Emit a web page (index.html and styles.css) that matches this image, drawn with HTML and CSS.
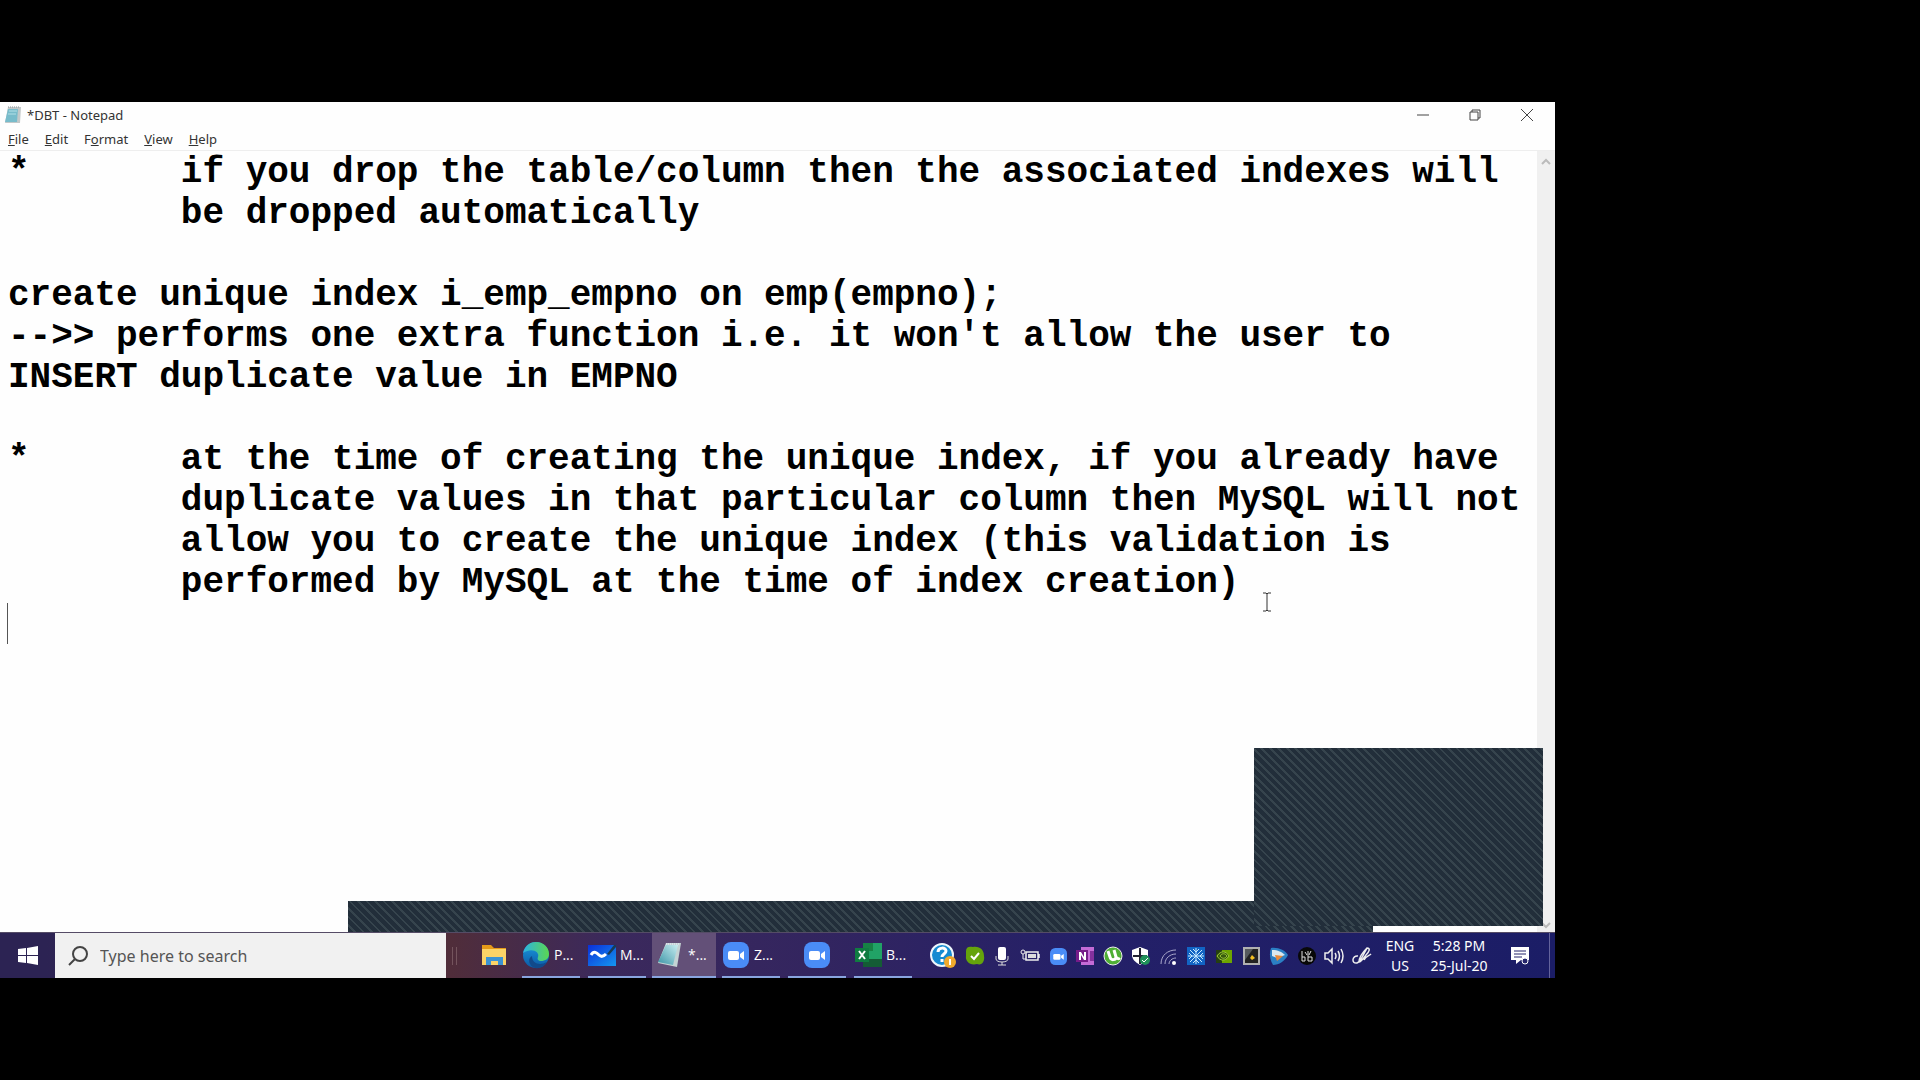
FILE: index.html
```html
<!DOCTYPE html>
<html lang="en">
<head>
<meta charset="utf-8">
<title>*DBT - Notepad</title>
<link rel="stylesheet" href="styles.css">
</head>
<body>
<svg class="defs" aria-hidden="true">
  <defs>
    <linearGradient id="edge-blue" x1="0" y1="0" x2="0" y2="1"><stop offset="0" stop-color="#1b9de2"/><stop offset="1" stop-color="#0c59a4"/></linearGradient>
    <linearGradient id="edge-green" x1="0" y1="0" x2="1" y2="0"><stop offset="0" stop-color="#2cb2e4"/><stop offset="1" stop-color="#5bd650"/></linearGradient>
    <linearGradient id="paper" x1="1" y1="0" x2="0" y2="1"><stop offset="0" stop-color="#c9eef1"/><stop offset="1" stop-color="#3a93a5"/></linearGradient>
    <linearGradient id="board" x1="0" y1="0" x2="1" y2="1"><stop offset="0" stop-color="#0b2fd8"/><stop offset="1" stop-color="#1497f0"/></linearGradient>
    <symbol id="zoom" viewBox="0 0 26 26"><rect width="26" height="26" rx="8" fill="#4a8cf7"/><rect x="5" y="9" width="11" height="9" rx="2" fill="#fff"/><path d="M17 12l4-3v9l-4-3z" fill="#fff"/></symbol>
  </defs>
</svg>
<main class="screen">
  <header class="titlebar">
    <svg class="app-icon" viewBox="0 0 18 18"><path d="M4 1h13l-1 16H1z" fill="#c3c8c9"/><path d="M4 3h10l-1 13H1z" fill="#78bccb"/><path d="M5 5h8M4 8h8" stroke="#b3e0e7"/><path d="M4 1h12" stroke="#8b9599" stroke-dasharray="1 1"/></svg>
    <h1 class="title">*DBT - Notepad</h1>
    <button class="window-button" aria-label="Minimize"><svg viewBox="0 0 14 14"><path d="M1 7h12"/></svg></button>
    <button class="window-button" aria-label="Restore"><svg viewBox="0 0 14 14"><path d="M2 4h8v8H2zM4 4V2h8v8h-2"/></svg></button>
    <button class="window-button" aria-label="Close"><svg viewBox="0 0 14 14"><path d="M1 1l12 12M13 1L1 13"/></svg></button>
  </header>
  <nav class="menubar">
    <button><u>F</u>ile</button>
    <button><u>E</u>dit</button>
    <button>F<u>o</u>rmat</button>
    <button><u>V</u>iew</button>
    <button><u>H</u>elp</button>
  </nav>
  <section class="editor">
    <textarea class="document" aria-label="Document text" spellcheck="false" wrap="off">*	if you drop the table/column then the associated indexes will
	be dropped automatically

create unique index i_emp_empno on emp(empno);
--&gt;&gt; performs one extra function i.e. it won't allow the user to
INSERT duplicate value in EMPNO

*	at the time of creating the unique index, if you already have
	duplicate values in that particular column then MySQL will not
	allow you to create the unique index (this validation is
	performed by MySQL at the time of index creation)
</textarea>
    <div class="scrollbar">
      <button aria-label="Scroll up"><svg viewBox="0 0 10 10"><path d="M1 7l4-4 4 4"/></svg></button>
      <button aria-label="Scroll down"><svg viewBox="0 0 10 10"><path d="M1 3l4 4 4-4"/></svg></button>
    </div>
    <span class="caret"></span>
    <svg class="pointer" viewBox="0 0 10 20"><path d="M1 1h3l1 1 1-1h3M5 2v16M1 19h3l1-1 1 1h3"/></svg>
    <div class="panel panel-low"></div>
    <div class="panel panel-high"></div>
  </section>
  <footer class="taskbar">
    <button class="start" aria-label="Start"><svg viewBox="0 0 20 20"><path d="M0 3l8-1v7H0zM9 2l11-2v9H9zM0 10h8v7l-8-1zM9 10h11v9L9 17z" fill="#fff"/></svg></button>
    <label class="search">
      <svg viewBox="0 0 20 20"><circle cx="12" cy="8" r="7"/><path d="M7 13l-6 6"/></svg>
      <input type="text" placeholder="Type here to search" aria-label="Search">
    </label>
    <span class="grip"></span>
    <div class="apps">
      <button class="app app-folder" aria-label="File Explorer"><svg viewBox="0 0 28 28"><path d="M2 4h9l3 3h12v4H2z" fill="#e49a19"/><path d="M2 8h24v16H2z" fill="#fbd367"/><path d="M6 24v-8h17v8h-5v-4h-7v4z" fill="#3b93d3"/></svg></button>
      <button class="app running"><svg viewBox="0 0 28 28"><circle cx="14" cy="14" r="13" fill="url(#edge-blue)"/><path d="M1 12C3 4 9 1 14 1c8 0 13 6 13 12 0 5-4 7-8 7-3 0-4-2-3-4 2-5-6-10-15-4z" fill="url(#edge-green)"/><path d="M10 15c0 8 8 10 15 6-3 5-7 7-12 6-6-2-8-9-3-12z" fill="#114a8b"/></svg><span>P...</span></button>
      <button class="app running"><svg viewBox="0 0 28 28"><path d="M0 4h28v21H0z" fill="url(#board)"/><path d="M3 14c3-5 6-2 8 0s4 2 7-1" fill="none" stroke="#fff" stroke-width="3"/><path d="M19 13l7-9h2v2l-7 8z" fill="#183c55"/></svg><span>M...</span></button>
      <button class="app running active"><svg viewBox="0 0 28 28"><path d="M10 2h15l-4 24L2 22z" fill="#c4d3d4"/><path d="M10 4h12l-5 20L2 21z" fill="url(#paper)"/><path d="M10 3h13" stroke="#eef" stroke-dasharray="1 1"/></svg><span>*...</span></button>
      <button class="app running"><svg viewBox="0 0 28 28"><use href="#zoom" x="1" y="1" width="26" height="26"/></svg><span>Z...</span></button>
      <button class="app running app-single" aria-label="Zoom"><svg viewBox="0 0 28 28"><use href="#zoom" x="1" y="1" width="26" height="26"/></svg></button>
      <button class="app running"><svg viewBox="0 0 28 28"><path d="M9 2h19v24H9z" fill="#21a366"/><path d="M9 2h10v8H9z" fill="#178245"/><path d="M9 18h19v8H9z" fill="#145c35"/><path d="M1 7h14v14H1z" fill="#107c41"/><path d="M5 10l6 8M11 10l-6 8" stroke="#fff" stroke-width="2"/></svg><span>B...</span></button>
    </div>
    <div class="tray">
      <svg class="help" viewBox="0 0 28 28"><circle cx="13" cy="13" r="11" fill="#168bd2" stroke="#eef7fc" stroke-width="2"/><path d="M9 10c0-5 8-5 8-1 0 3-4 3-4 6M13 17v3" fill="none" stroke="#fff" stroke-width="3"/><circle cx="21" cy="20" r="6" fill="#f0a92d"/><path d="M21 17v6" stroke="#fff" stroke-width="2"/></svg>
      <svg viewBox="0 0 20 20"><path d="M1 5c0-4 3-5 7-4 7-1 11 3 11 9 1 5-2 10-7 8C5 20 0 15 1 10z" fill="#65a30c"/><path d="M6 10l3 3 5-6" fill="none" stroke="#fff" stroke-width="2"/></svg>
      <svg viewBox="0 0 20 20"><rect x="6" y="1" width="8" height="13" rx="2" fill="#fff"/><path d="M4 10v3c0 4 12 4 12 0v-3M10 16v3M6 19h8" fill="none" stroke="#ddd"/></svg>
      <svg viewBox="0 0 20 20"><path d="M6 6h12v8H6zM19 8v4" fill="none" stroke="#eee" stroke-width="1.5"/><path d="M8 8h8v4H8z" fill="#ddd"/><circle cx="3" cy="6" r="2" fill="#33286a" stroke="#eee"/><path d="M3 8v5h3" fill="none" stroke="#eee"/></svg>
      <svg viewBox="0 0 20 20"><use href="#zoom" x="2" y="2" width="17" height="17"/></svg>
      <svg viewBox="0 0 20 20"><path d="M6 1h13v18H6z" fill="#c46bd6"/><path d="M15 5h4v10h-4z" fill="#85319e"/><path d="M1 4h12v12H1z" fill="#761b89"/><path d="M4 14V6h2l3 5V6h2v8H9L6 9v5z" fill="#fff"/></svg>
      <svg viewBox="0 0 20 20"><circle cx="10" cy="10" r="9" fill="#4fae35" stroke="#eee"/><path d="M5 5l2 6c1 4 6 3 6 0l-2-7M13 11c1 2 3 2 4 1" fill="none" stroke="#fff" stroke-width="3"/></svg>
      <svg viewBox="0 0 20 20"><path d="M9 1l8 3v6c0 4-5 7-8 9-5-3-8-6-8-10V4z" fill="#fff"/><path d="M9 2v16M2 10h14" stroke="#223" stroke-width="2"/><circle cx="14" cy="14" r="5" fill="#20915a"/><path d="M11 14l2 2 4-4" fill="none" stroke="#fff"/></svg>
      <svg viewBox="0 0 20 20"><path d="M3 18C3 9 10 4 18 4M7 18c0-6 5-10 11-10M11 18c0-3 3-6 7-6" fill="none" stroke="#aaa8cc"/><circle cx="16" cy="17" r="2" fill="#fff"/></svg>
      <svg viewBox="0 0 20 20"><path d="M1 1h18v18H1z" fill="#1264c4"/><path d="M10 2v16M2 10h16M4 4l12 12M16 4L4 16M7 3l3 3 3-3M7 17l3-3 3 3M3 7l3 3-3 3M17 7l-3 3 3 3" fill="none" stroke="#c6e9ff"/></svg>
      <svg viewBox="0 0 20 20"><path d="M2 4h16v13H2z" fill="#253f11"/><path d="M8 4h10v13H8z" fill="#6da500"/><path d="M3 10c4-6 9-5 12 0-4 6-9 5-12 0z" fill="#385c0e" stroke="#9dca37"/><path d="M6 10c2-3 5-3 7 0-2 3-5 3-7 0" fill="none" stroke="#9dca37"/></svg>
      <svg viewBox="0 0 20 20"><path d="M3 2h15v16H3z" fill="#222" stroke="#b0b0b0" stroke-width="2"/><path d="M4 3h8L4 14z" fill="#55595c"/><path d="M11 9l3 3-3 2-2-2z" fill="#f2be21"/></svg>
      <svg viewBox="0 0 20 20"><path d="M2 2c7-1 14 2 17 7-3 6-9 10-15 10C1 14 0 8 2 2z" fill="#2b7fc4"/><path d="M3 4c6 0 10 2 13 5l-8 3-5-2z" fill="#d9e8ef"/><path d="M6 9l8 1-6 5z" fill="#e8893a"/></svg>
      <svg viewBox="0 0 20 20"><circle cx="10" cy="10" r="9" fill="#080808"/><path d="M5 5v10h3v-4H5M11 5v10h4v-4h-4M8 6l2 3M14 5l-2 4" fill="none" stroke="#ddd"/></svg>
      <svg viewBox="0 0 20 20"><path d="M1 7h3l4-4v14l-4-4H1zM11 7q2 3 0 6M14 5q3 5 0 10M17 3q4 7 0 14" fill="none" stroke="#eee" stroke-width="1.5"/></svg>
      <svg viewBox="0 0 20 20"><path d="M6 10c-6-1-7 8-1 7 4-1 8-12 10-15 4 0 2 4-1 7-3 4-5 7-7 7 0-4 3-9 8-14M12 14c2-4 5-4 7-6" fill="none" stroke="#eee" stroke-width="1.5"/></svg>
    </div>
    <div class="language"><span>ENG</span><span>US</span></div>
    <div class="clock"><time>5:28 PM</time><time>25-Jul-20</time></div>
    <button class="notifications" aria-label="Notifications"><svg viewBox="0 0 20 20"><path d="M1 1h18v13h-8l-5 4v-4H1z" fill="#fff"/><path d="M4 5h12M4 8h12M4 11h8" stroke="#24246b"/><circle cx="15" cy="15" r="3" fill="#24246b" stroke="#fff"/></svg></button>
    <button class="show-desktop" aria-label="Show desktop"></button>
  </footer>
</main>
</body>
</html>
```
FILE: styles.css
```css
* { box-sizing: border-box; }
body { margin: 0; background: #000; font-family: "Open Sans", "Noto Sans", sans-serif; }
button { border: 0; padding: 0; margin: 0; background: none; color: inherit; font: inherit; }
svg { display: block; flex: none; }
.defs { position: absolute; width: 0; height: 0; }

.screen { display: flex; flex-direction: column; min-height: calc(100vh - 204px); margin: 102px 365px 102px 0; background: #fefefe; }

.titlebar { display: flex; align-items: center; height: 25px; padding: 0 2px 0 4px; color: #333; }
.app-icon { width: 18px; height: 18px; }
.title { flex: 1; margin: 0 0 0 5px; font-family: "Noto Sans", sans-serif; font-size: 13px; font-weight: 400; }
.window-button { display: grid; place-items: center; width: 52px; height: 24px; }
.window-button svg { width: 14px; height: 14px; fill: none; stroke: #444; }

.menubar { display: flex; align-items: center; gap: 16px; height: 24px; padding-left: 8px; border-bottom: 1px solid #eee; color: #333; font-family: "Noto Sans", sans-serif; font-size: 13px; line-height: 20px; }

.editor { position: relative; display: flex; flex: 1; }
.document { flex: 1; min-width: 0; padding: 1px 0 0 8px; border: 0; outline: 0; resize: none; overflow: hidden; background: transparent; color: #000; font: 700 36px/41px "Liberation Mono", monospace; tab-size: 8; white-space: pre; }
.scrollbar { display: flex; flex-direction: column; justify-content: space-between; width: 18px; padding: 6px 4px 2px; background: #f0f0f0; }
.scrollbar svg { width: 10px; height: 10px; fill: none; stroke: #bbb; stroke-width: 2; }
.caret { position: absolute; left: 7px; top: 452px; width: 1px; height: 41px; background: #555; }
.pointer { position: absolute; left: 1262px; top: 441px; width: 10px; height: 20px; fill: none; stroke: #333; }
.panel { position: absolute; background: #222e3a repeating-linear-gradient(45deg, #222e3a 0 4px, #36444d 4px 6px); }
.panel-low { left: 348px; right: 182px; bottom: 0; height: 31px; }
.panel-high { left: 1254px; right: 12px; bottom: 6px; height: 178px; }

.taskbar { display: flex; height: 46px; border-top: 1px solid #554c66; color: #fff; background: linear-gradient(90deg, #2c2353 0 3%, #502d3a 29%, #3b295c 39%, #33255f 52%, #242068 70%, #1b1d66 100%); }
.start { display: grid; place-items: center; width: 55px; }
.start svg { width: 20px; height: 20px; }
.search { display: flex; align-items: center; gap: 12px; width: 391px; padding-left: 13px; background: #f1f1f1; color: #444; }
.search svg { width: 20px; height: 20px; fill: none; stroke: #444; stroke-width: 2; }
.search input { flex: 1; min-width: 0; padding: 0; border: 0; outline: 0; background: none; font: 16px "Noto Sans", sans-serif; }
.search input::placeholder { color: #555; opacity: 1; }
.grip { align-self: center; width: 5px; height: 18px; margin: 0 23px 0 6px; border: solid #74545d; border-width: 0 1px; }
.apps { display: flex; gap: 8px; }
.app { display: flex; align-items: center; gap: 4px; width: 58px; border-bottom: 2px solid transparent; font-size: 14px; }
.app svg { width: 28px; height: 28px; }
.app-folder { width: 34px; }
.app-single { justify-content: center; }
.running { border-color: #89a5df; }
.active { width: 64px; margin: 0 -2px; padding-left: 4px; background: #635078; }

.tray { display: flex; align-items: center; justify-content: space-between; width: 443px; margin-left: 17px; }
.tray svg { width: 20px; height: 20px; }
.tray .help { width: 28px; height: 28px; }
.language, .clock { display: flex; flex-direction: column; align-items: center; justify-content: center; font: 14px/20px "Noto Sans", sans-serif; }
.language { width: 56px; }
.clock { width: 62px; }
.notifications { display: grid; place-items: center; flex: 1; }
.notifications svg { width: 20px; height: 20px; }
.show-desktop { width: 6px; border-left: 1px solid #63639c; }
```
